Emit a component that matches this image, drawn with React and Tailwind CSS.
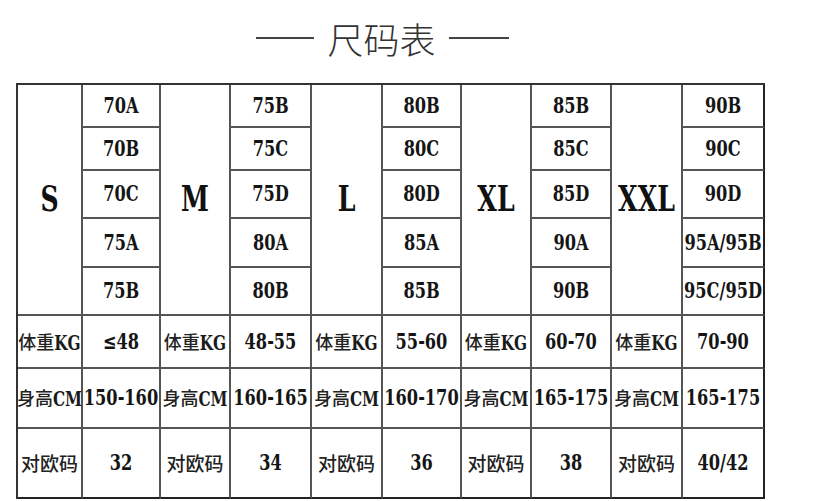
const groups = [
  { size: "S", cups: ["70A", "70B", "70C", "75A", "75B"], kg: "≤48", cm: "150-160", eu: "32" },
  { size: "M", cups: ["75B", "75C", "75D", "80A", "80B"], kg: "48-55", cm: "160-165", eu: "34" },
  { size: "L", cups: ["80B", "80C", "80D", "85A", "85B"], kg: "55-60", cm: "160-170", eu: "36" },
  { size: "XL", cups: ["85B", "85C", "85D", "90A", "90B"], kg: "60-70", cm: "165-175", eu: "38" },
  { size: "XXL", cups: ["90B", "90C", "90D", "95A/95B", "95C/95D"], kg: "70-90", cm: "165-175", eu: "40/42" },
];

const rows = [
  { zh: "体重", en: "KG", key: "kg" },
  { zh: "身高", en: "CM", key: "cm" },
  { zh: "对欧码", en: "", key: "eu" },
];

const cell = "flex items-center justify-center border-r-2 border-b-2 border-[#555] whitespace-nowrap";
const slab = "font-['DejaVu_Serif_Condensed','DejaVu_Serif',serif] font-bold";
const cjk = "font-['Noto_Sans_CJK_SC',sans-serif]";

function Num({ children }) {
  return (
    <span className={slab + " inline-block scale-y-[1.2] text-[18px] leading-none text-[#151515]"}>
      {children}
    </span>
  );
}

export default function App() {
  // top block: size letter spans 5 rows, cup sizes fill the column beside it
  const top = [];
  for (let r = 0; r < 5; r++) {
    groups.forEach((g, gi) => {
      if (r === 0) {
        top.push(
          <div key={"s" + gi} className={cell + " row-span-5"}>
            <span className={slab + " inline-block scale-y-[1.25] text-[28px] leading-none text-[#111]"}>{g.size}</span>
          </div>
        );
      }
      top.push(
        <div key={"c" + r + gi} className={cell + (gi === 4 ? " border-r-[#222]" : "")}>
          <Num>{g.cups[r]}</Num>
        </div>
      );
    });
  }

  return (
    <div className="w-[828px] h-[501px] bg-white overflow-hidden">
      <div className="flex items-center justify-center gap-[13px] pt-[20px] pr-[17px] w-[782px]">
        <div className="h-[2px] w-[58px] bg-[#444]" />
        <span className={cjk + " text-[36px] leading-[36px] font-light text-[#333]"}>尺码表</span>
        <div className="h-[2px] w-[60px] bg-[#444]" />
      </div>

      <div className="mt-[27px] ml-[16px] w-[749px] grid border-t-2 border-l-2 border-[#333] grid-cols-[65px_78px_70px_81px_71px_79px_70px_80px_71px_82px] grid-rows-[43px_43px_48px_49px_48px_53px_60px_70px]">
        {top}
        {rows.map((row, ri) =>
          groups.map((g, gi) => {
            const last = ri === 2 ? " border-b-[#222]" : "";
            return [
              <div key={row.key + "l" + gi} className={cell + last}>
                <span className="leading-none text-[#222]">
                  <span className={cjk + (row.en ? " text-[18px]" : " text-[19px]") + " font-medium"}>{row.zh}</span>
                  {row.en && (
                    <span className={slab + " inline-block scale-y-[1.2] text-[17px] text-[#1a1a1a]"}>{row.en}</span>
                  )}
                </span>
              </div>,
              <div key={row.key + "v" + gi} className={cell + last + (gi === 4 ? " border-r-[#222]" : "")}>
                <Num>{g[row.key]}</Num>
              </div>,
            ];
          })
        )}
      </div>
    </div>
  );
}
